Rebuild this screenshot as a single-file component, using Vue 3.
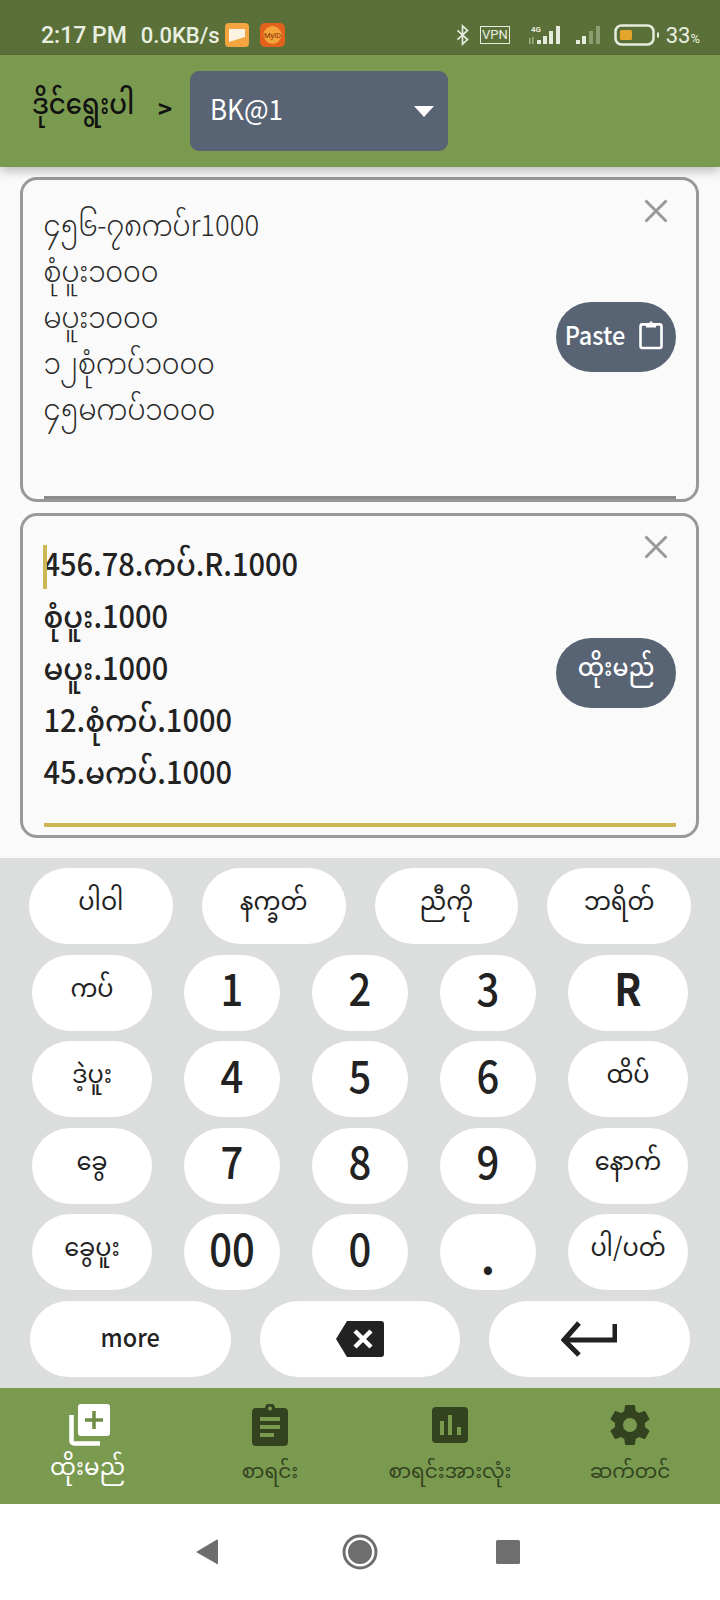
<script setup>
const rows = [
  { cls: 'r1', keys: [{ t: 'ပါဝါ' }, { t: 'နက္ခတ်' }, { t: 'ညီကို' }, { t: 'ဘရိတ်' }] },
  { cls: 'r2', keys: [{ t: 'ကပ်' }, { t: '1', n: 1 }, { t: '2', n: 1 }, { t: '3', n: 1 }, { t: 'R', n: 1, b: 1 }] },
  { cls: 'r2', keys: [{ t: 'ဒဲ့ပူး' }, { t: '4', n: 1 }, { t: '5', n: 1 }, { t: '6', n: 1 }, { t: 'ထိပ်' }] },
  { cls: 'r2', keys: [{ t: 'ခွေ' }, { t: '7', n: 1 }, { t: '8', n: 1 }, { t: '9', n: 1 }, { t: 'နောက်' }] },
  { cls: 'r2', keys: [{ t: 'ခွေပူး' }, { t: '00', n: 1 }, { t: '0', n: 1 }, { t: '.', n: 1, d: 1 }, { t: 'ပါ/ပတ်' }] }
]
const input1 = ['၄၅၆-၇၈ကပ်r1000', 'စုံပူး၁၀၀၀', 'မပူး၁၀၀၀', '၁၂စုံကပ်၁၀၀၀', '၄၅မကပ်၁၀၀၀']
const input2 = ['456.78.ကပ်.R.1000', 'စုံပူး.1000', 'မပူး.1000', '12.စုံကပ်.1000', '45.မကပ်.1000']
</script>

<template>
  <div class="page">
    <div class="status">
      <div class="st-left">
        <span class="time">2:17 PM</span>
        <span class="speed">0.0KB/s</span>
        <svg class="app-icon" width="24" height="24" viewBox="0 0 24 24">
          <rect width="24" height="24" rx="4" fill="#f5a53f" />
          <path d="M4 6h16v8L4 19z" fill="#fdf3e2" />
        </svg>
        <svg class="app-icon second" width="25" height="24" viewBox="0 0 25 24">
          <rect width="25" height="24" rx="5" fill="#e2611c" />
          <circle cx="12.500" cy="12" r="9" fill="#f3a33a" />
          <text x="12.500" y="14.500" font-size="7.500" text-anchor="middle" fill="#8a2f0c" font-family="Roboto, sans-serif">MyID</text>
        </svg>
      </div>
      <div class="st-right">
        <svg width="15" height="22" viewBox="0 0 14 24" fill="none" stroke="#e6ecdc" stroke-width="1.800">
          <path d="M1.500 7l11 10-5.500 5V2l5.500 5-11 10" />
        </svg>
        <span class="vpn">VPN</span>
        <svg class="sig" width="37" height="20" viewBox="0 0 37 20">
          <text x="3" y="6.500" font-size="8" font-weight="700" fill="#e6ecdc" font-family="Roboto, sans-serif">4G</text>
          <path d="M1 13v6h1.500v-6zM4 12v7h1.500v-7z" fill="#9fb184" />
          <rect x="9" y="15" width="4" height="4" fill="#e6ecdc" />
          <rect x="15" y="11" width="4" height="8" fill="#e6ecdc" />
          <rect x="21" y="6" width="4" height="13" fill="#e6ecdc" />
          <rect x="28" y="1" width="4" height="18" fill="#e6ecdc" />
        </svg>
        <svg class="sig2" width="27" height="20" viewBox="0 0 27 20">
          <rect x="1" y="15" width="4" height="4" fill="#e6ecdc" />
          <rect x="7" y="11" width="4" height="8" fill="#e6ecdc" />
          <rect x="14" y="6" width="4" height="13" fill="#8b9e70" />
          <rect x="21" y="1" width="4" height="18" fill="#8b9e70" />
        </svg>
        <svg class="batt" width="46" height="22" viewBox="0 0 46 22">
          <rect x="1.500" y="1.500" width="38" height="19" rx="6" fill="none" stroke="#e6ecdc" stroke-width="2.500" />
          <rect x="6" y="6" width="12" height="10" rx="1.500" fill="#e5a52a" />
          <rect x="43" y="8.500" width="2" height="5" fill="#e6ecdc" />
        </svg>
        <span class="pct">33<small>%</small></span>
      </div>
    </div>

    <header class="head">
      <span class="head-title">ဒိုင်ရွေးပါ</span>
      <span class="head-gt">&gt;</span>
      <div class="select">
        <span class="select-text">BK@1</span>
        <i class="caret-down"></i>
      </div>
    </header>

    <main class="inputs">
      <section class="card">
        <div class="lines light">
          <div v-for="l in input1" :key="l">{{ l }}</div>
        </div>
        <svg class="close" width="24" height="24" viewBox="0 0 24 24" fill="none" stroke="#999" stroke-width="3">
          <path d="M1.500 1.500l21 21M22.500 1.500l-21 21" />
        </svg>
        <button class="action">
          <span class="action-text">Paste</span>
          <svg class="clip" width="24" height="28" viewBox="0 0 24 28" preserveAspectRatio="none" fill="none" stroke="#fff" stroke-width="2.600">
            <rect x="1.500" y="4" width="21" height="22.500" rx="2" />
            <path d="M7 3h10v4H7z" fill="#fff" stroke="none" />
            <circle cx="12" cy="2.500" r="1.500" fill="#fff" stroke="none" />
          </svg>
        </button>
        <div class="rule gray"></div>
      </section>

      <section class="card second-card">
        <div class="lines heavy">
          <div v-for="l in input2" :key="l">{{ l }}</div>
        </div>
        <i class="text-caret"></i>
        <svg class="close" width="24" height="24" viewBox="0 0 24 24" fill="none" stroke="#999" stroke-width="3">
          <path d="M1.500 1.500l21 21M22.500 1.500l-21 21" />
        </svg>
        <button class="action mm"><span class="action-text">ထိုးမည်</span></button>
        <div class="rule gold"></div>
      </section>
    </main>

    <section class="keyboard">
      <div v-for="(row, i) in rows" :key="i" class="row" :class="row.cls">
        <button
          v-for="k in row.keys"
          :key="k.t"
          class="key"
          :class="{ num: k.n, bold: k.b, dot: k.d }"
        ><span class="lbl">{{ k.t }}</span></button>
      </div>
      <div class="row r6">
        <button class="key more"><span class="lbl">more</span></button>
        <button class="key">
          <svg width="48" height="36" viewBox="0 0 48 36">
            <path d="M11 0h34a3 3 0 0 1 3 3v30a3 3 0 0 1-3 3H11L0 18z" fill="#222" />
            <path d="M19 10l16 16M35 10L19 26" stroke="#fff" stroke-width="4.500" fill="none" />
          </svg>
        </button>
        <button class="key">
          <svg width="56" height="36" viewBox="0 0 56 36" fill="none" stroke="#222" stroke-width="5">
            <path d="M54 3v16H5" />
            <path d="M18 2L3 19l15 15" />
          </svg>
        </button>
      </div>
    </section>

    <nav class="tabs">
      <div class="tab active">
        <svg width="42" height="42" viewBox="0 0 42 42">
          <path d="M2.500 11v26a2.500 2.500 0 0 0 2.500 2.500h26" fill="none" stroke="#fff" stroke-width="4.500" />
          <rect x="9" y="0" width="32" height="32" rx="3" fill="#fff" />
          <path d="M25 7v18M16 16h18" stroke="#6f8d45" stroke-width="3.500" />
        </svg>
        <span>ထိုးမည်</span>
      </div>
      <div class="tab">
        <svg width="36" height="42" viewBox="0 0 36 42">
          <path d="M4 4h9a5 5 0 0 1 10 0h9a4 4 0 0 1 4 4v30a4 4 0 0 1-4 4H4a4 4 0 0 1-4-4V8a4 4 0 0 1 4-4z" fill="#34431f" />
          <circle cx="18" cy="4.500" r="2" fill="#7a9a50" />
          <path d="M8 13h20v4H8zM8 21h20v4H8zM8 29h14v4H8z" fill="#7a9a50" />
        </svg>
        <span>စာရင်း</span>
      </div>
      <div class="tab">
        <svg width="36" height="42" viewBox="0 0 36 38">
          <rect width="36" height="36" rx="4" y="1" fill="#34431f" />
          <path d="M8 15h4v14H8zM16 9h4v20h-4zM25 21h4v8h-4z" fill="#7a9a50" />
        </svg>
        <span>စာရင်းအားလုံး</span>
      </div>
      <div class="tab">
        <svg class="gear" width="40" height="40" viewBox="2 2 20 20">
          <path fill="#34431f" d="M19.430 12.980c.04-.32.070-.64.070-.98s-.03-.66-.07-.98l2.110-1.650c.19-.15.240-.42.120-.64l-2-3.460c-.12-.22-.39-.30-.61-.22l-2.490 1c-.52-.4-1.080-.73-1.690-.98l-.38-2.650A.49.49 0 0 0 14 2h-4c-.25 0-.46.18-.49.420l-.38 2.650c-.61.250-1.170.59-1.690.98l-2.490-1a.5.5 0 0 0-.61.220l-2 3.460c-.13.220-.07.490.12.640l2.110 1.650c-.04.320-.07.650-.07.980s.03.660.07.980l-2.110 1.650c-.19.150-.24.420-.12.640l2 3.460c.12.220.39.300.61.220l2.490-1c.52.4 1.080.73 1.690.98l.38 2.650c.03.240.24.420.49.420h4c.25 0 .46-.18.49-.42l.38-2.650c.61-.25 1.170-.59 1.690-.98l2.490 1c.23.090.49 0 .61-.22l2-3.460c.12-.22.070-.49-.12-.64l-2.110-1.650zM12 15.500a3.500 3.500 0 1 1 0-7 3.500 3.500 0 0 1 0 7z" />
        </svg>
        <span>ဆက်တင်</span>
      </div>
    </nav>

    <footer class="sysnav">
      <svg width="24" height="26" viewBox="0 0 24 26"><path d="M23 1v24a1 1 0 0 1-1 0L1 13 22 .500a1 1 0 0 1 1 .500z" fill="#6e6e6e" /></svg>
      <svg class="home" width="36" height="36" viewBox="0 0 36 36">
        <circle cx="18" cy="18" r="16" fill="none" stroke="#6e6e6e" stroke-width="3" />
        <circle cx="18" cy="18" r="12" fill="#6e6e6e" />
      </svg>
      <svg class="recent" width="24" height="24" viewBox="0 0 24 24"><rect width="24" height="24" rx="1.500" fill="#6e6e6e" /></svg>
    </footer>
  </div>
</template>

<style>
html, body { margin: 0; padding: 0; }
</style>

<style scoped>
.page {
  width: 720px;
  height: 1600px;
  display: flex;
  flex-direction: column;
  background: #fafafa;
  font-family: "Noto Sans CJK SC", "Noto Sans Myanmar", "Padauk", "Noto Sans", sans-serif;
  color: #212121;
  overflow: hidden;
}
.status {
  height: 55px;
  background: #5b7039;
  display: flex;
  justify-content: space-between;
  align-items: center;
  padding: 15px 20px 0 41px;
  box-sizing: border-box;
  color: #e9efe0;
  font-family: Roboto, sans-serif;
}
.st-left, .st-right { display: flex; align-items: center; }
.time { font-size: 23px; font-weight: 500; }
.speed { font-size: 22px; font-weight: 500; margin-left: 14px; }
.app-icon { margin-left: 5px; }
.app-icon.second { margin-left: 11px; }
.st-right svg { display: block; }
.vpn {
  margin-left: 10px;
  border: 1.500px solid #e6ecdc;
  font-size: 13px;
  line-height: 16px;
  padding: 0 1px;
}
.sig { margin-left: 18px; }
.sig2 { margin-left: 10px; }
.batt { margin-left: 12px; }
.pct { font-size: 22px; margin-left: 6px; }
.pct small { font-size: 13px; }

.head {
  height: 112px;
  flex: none;
  background: #7a9a50;
  display: flex;
  align-items: center;
  padding-left: 32px;
  box-shadow: 0 4px 10px rgba(0, 0, 0, .25);
  position: relative;
  z-index: 1;
  color: #111;
}
.head-title {
  font-size: 26px;
  font-weight: 500;
  width: 126px;
  padding-bottom: 6px;
  transform: scaleY(1.12);
}
.head-gt { font-size: 24px; font-weight: 700; width: 32px; padding-bottom: 8px; }
.select {
  width: 258px;
  height: 80px;
  background: #586374;
  border-radius: 9px;
  color: #fff;
  display: flex;
  align-items: center;
  justify-content: space-between;
  padding: 0 14px 0 20px;
  box-sizing: border-box;
  font-size: 26px;
}
.select-text { padding-bottom: 8px; transform: scaleY(1.08); font-weight: 400; }
.caret-down {
  width: 0;
  height: 0;
  border-left: 10px solid transparent;
  border-right: 10px solid transparent;
  border-top: 11px solid #fff;
}

.inputs {
  flex: 1;
  padding: 10px 21px 0 20px;
  display: flex;
  flex-direction: column;
  gap: 11px;
}
.card {
  position: relative;
  height: 325px;
  box-sizing: border-box;
  border: 3.500px solid #999;
  border-radius: 17px;
  padding: 20px 20px 0 20.500px;
}
.lines div { transform: scaleY(1.08); transform-origin: center; }
.lines.light { font-size: 27.500px; line-height: 46px; font-weight: 300; color: #2a2a2a; }
.lines.heavy { font-size: 29px; line-height: 52px; font-weight: 500; color: #222; }
.text-caret {
  position: absolute;
  left: 20px;
  top: 29px;
  width: 4px;
  height: 44px;
  background: #cdb755;
}
.close { position: absolute; right: 28px; top: 19px; }
.action {
  position: absolute;
  right: 20px;
  top: 122px;
  width: 120px;
  height: 70px;
  border: 0;
  border-radius: 35px;
  background: #586374;
  color: #fff;
  font: 500 23.500px "Noto Sans CJK SC", "Noto Sans Myanmar", "Padauk", sans-serif;
  display: flex;
  align-items: center;
  justify-content: center;
  gap: 14px;
  padding: 0 4px 0 0;
  box-sizing: border-box;
}
.action-text { padding-bottom: 6px; transform: scaleY(1.08); }
.action.mm { padding: 0; }
.clip { transform: scaleY(1.05) translateY(-2px); }
.rule { position: absolute; left: 20.500px; right: 20px; }
.rule.gray { bottom: 0; height: 3px; background: #8c8c8c; }
.rule.gold { bottom: 8px; height: 4px; background: #cdb755; }

.keyboard {
  height: 530px;
  flex: none;
  background: #dcdedd;
  box-sizing: border-box;
  padding-top: 10px;
  display: flex;
  flex-direction: column;
  gap: 10.600px;
}
.row { display: flex; height: 76px; flex: none; }
.r1 { padding: 0 29px; gap: 29px; }
.r1 .key { width: 144px; }
.r2 { padding: 0 32px; gap: 32px; }
.r2 .key { width: 96px; }
.r2 .key:first-child, .r2 .key:last-child { width: 120px; }
.r6 { padding: 0 30px; gap: 29px; }
.r6 .key { width: 200.500px; }
.key {
  height: 76px;
  border: 0;
  padding: 0;
  background: #fff;
  border-radius: 38px;
  display: flex;
  align-items: center;
  justify-content: center;
  font: 400 24px "Noto Sans CJK SC", "Noto Sans Myanmar", "Padauk", sans-serif;
  color: #222;
}
.lbl { display: block; padding-bottom: 3px; transform: scaleY(1.08); }
.key.num { font-size: 40px; font-weight: 500; }
.key.num .lbl { padding-bottom: 9px; transform: scaleY(1.12); }
.key.bold { font-weight: 700; }
.key.dot { align-items: flex-end; font-weight: 700; font-size: 44px; line-height: 1; }
.key.dot .lbl { padding-bottom: 13px; transform: none; }
.key.more { font-weight: 500; font-size: 23.500px; }
.key.more .lbl { padding-bottom: 6px; }

.tabs {
  height: 116px;
  flex: none;
  background: #7a9a50;
  display: grid;
  grid-template-columns: repeat(4, 180px);
  box-sizing: border-box;
  padding-top: 16px;
}
.tab {
  display: flex;
  flex-direction: column;
  align-items: center;
  font-size: 20px;
  color: #34431f;
  line-height: 30px;
  gap: 9px;
}
.tab.active { color: #fff; font-size: 23px; gap: 4px; }
.tab.active span { margin-left: -5px; }
.gear { margin: 1px 0; }

.sysnav {
  flex: none;
  height: 96px;
  background: #fff;
  display: flex;
  align-items: center;
  justify-content: center;
  gap: 123px;
  padding-right: 6px;
}
.recent { margin-left: -5px; }
</style>
